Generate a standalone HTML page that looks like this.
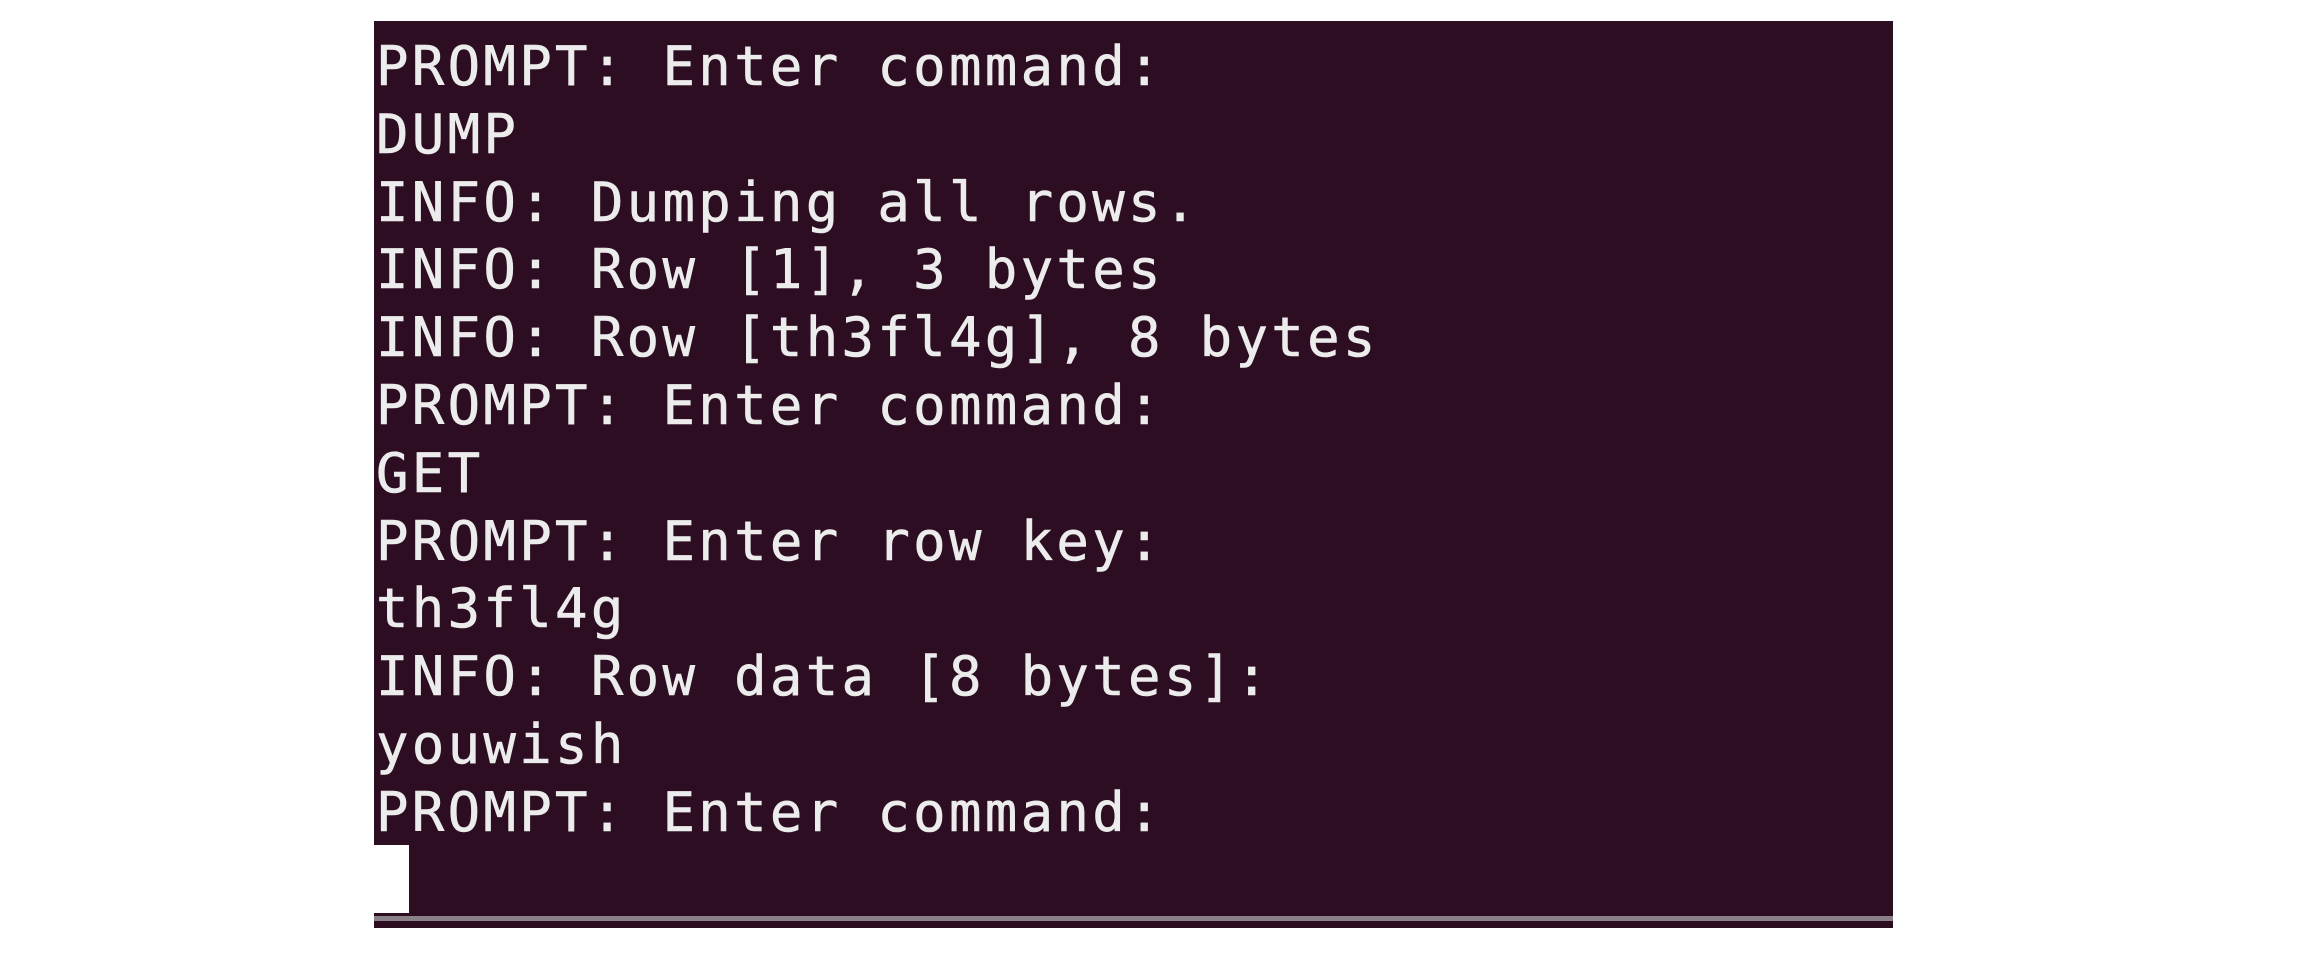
<!DOCTYPE html>
<html><head><style>
html,body{margin:0;padding:0;background:#fff;width:2316px;height:972px;overflow:hidden}
#t{position:absolute;left:374px;top:21px;width:1519px;height:907px;background:#2d0d22}
#txt{position:absolute;left:2px;top:12px;font-family:"DejaVu Sans Mono",monospace;font-size:54px;line-height:67.8px;letter-spacing:3.3px;color:#ececec;white-space:pre;margin:0;-webkit-text-stroke:0.6px #ececec}
#cur{position:absolute;left:0;top:824px;width:35px;height:68px;background:#fff}
#bar{position:absolute;left:0;top:895px;width:1519px;height:5px;background:#8a8087}
</style></head><body>
<div id="t">
<pre id="txt">PROMPT: Enter command:
DUMP
INFO: Dumping all rows.
INFO: Row [1], 3 bytes
INFO: Row [th3fl4g], 8 bytes
PROMPT: Enter command:
GET
PROMPT: Enter row key:
th3fl4g
INFO: Row data [8 bytes]:
youwish
PROMPT: Enter command:</pre>
<div id="cur"></div>
<div id="bar"></div>
</div>
</body></html>
